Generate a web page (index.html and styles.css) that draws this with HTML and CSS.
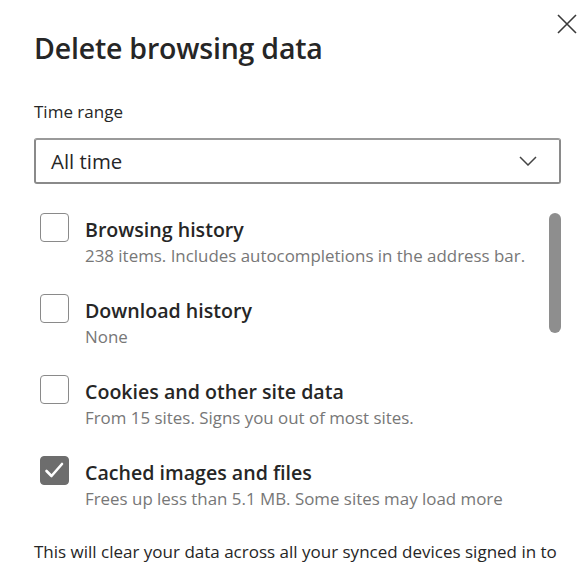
FILE: index.html
```html
<!DOCTYPE html>
<html lang="en">
<head>
<meta charset="utf-8">
<title>Delete browsing data</title>
<link rel="stylesheet" href="styles.css">
</head>
<body>
<div class="dialog">
  <button class="close" aria-label="Close">
    <svg width="20" height="20" viewBox="0 0 20 20"><path d="M1 1L19 19M19 1L1 19" stroke="#3a3a3a" stroke-width="1.6" fill="none"/></svg>
  </button>
  <h1 class="title">Delete browsing data</h1>
  <div class="field-label">Time range</div>
  <div class="select">
    <span class="select-value">All time</span>
    <svg class="chevron" width="18" height="10" viewBox="0 0 18 10"><path d="M1 1L9 9L17 1" stroke="#444" stroke-width="1.5" fill="none"/></svg>
  </div>
  <div class="list-area">
    <div class="list">
      <div class="row">
        <span class="box"></span>
        <div class="text">
          <div class="label">Browsing history</div>
          <div class="desc">238 items. Includes autocompletions in the address bar.</div>
        </div>
      </div>
      <div class="row">
        <span class="box"></span>
        <div class="text">
          <div class="label">Download history</div>
          <div class="desc">None</div>
        </div>
      </div>
      <div class="row">
        <span class="box"></span>
        <div class="text">
          <div class="label">Cookies and other site data</div>
          <div class="desc">From 15 sites. Signs you out of most sites.</div>
        </div>
      </div>
      <div class="row">
        <span class="box checked">
          <svg width="27" height="27" viewBox="0 0 27 27"><path d="M5.5 14L10.5 19L21 7" stroke="#fff" stroke-width="2.6" fill="none" stroke-linecap="round" stroke-linejoin="round"/></svg>
        </span>
        <div class="text">
          <div class="label">Cached images and files</div>
          <div class="desc">Frees up less than 5.1 MB. Some sites may load more</div>
        </div>
      </div>
    </div>
    <div class="track"><div class="thumb"></div></div>
  </div>
  <p class="note">This will clear your data across all your synced devices signed in to</p>
</div>
</body>
</html>
```
FILE: styles.css
```css
html, body {
  margin: 0;
  padding: 0;
  background: #fff;
  overflow: hidden;
}
body {
  font-family: "Open Sans", "Noto Sans", sans-serif;
  color: #1f1f1f;
}
.dialog {
  position: relative;
  padding: 28px 24px 0 34px;
  height: 567px;
  box-sizing: border-box;
}
.close {
  position: absolute;
  top: 14px;
  right: 8px;
  width: 20px;
  height: 20px;
  padding: 0;
  border: 0;
  background: none;
  display: flex;
}
.title {
  margin: 0;
  font-size: 28.5px;
  font-weight: 600;
  line-height: 40px;
  color: #262626;
  letter-spacing: -0.2px;
}
.field-label {
  margin-top: 34px;
  font-size: 17px;
  line-height: 20px;
  color: #262626;
}
.select {
  margin-top: 16px;
  height: 46px;
  box-sizing: border-box;
  border: 2px solid #8a8a8a;
  border-top-color: #9a9a9a;
  border-radius: 3px;
  display: flex;
  align-items: center;
  justify-content: space-between;
  padding: 0 22px 0 15px;
}
.select-value {
  font-size: 20.4px;
  color: #262626;
}
.chevron {
  display: block;
}
.list-area {
  display: flex;
  margin-top: 29px;
}
.list {
  flex: 1;
  display: flex;
  flex-direction: column;
  gap: 23px;
  padding-left: 6px;
}
.row {
  display: flex;
  gap: 16px;
  height: 58px;
}
.text {
  padding-top: 1px;
}
.box {
  width: 29px;
  height: 29px;
  box-sizing: border-box;
  border: 1px solid #8a8a8a;
  border-radius: 4px;
  flex: none;
  display: flex;
  align-items: center;
  justify-content: center;
}
.box.checked {
  background: #6d6d6d;
  border-color: #6d6d6d;
}
.label {
  font-size: 19.6px;
  font-weight: 600;
  line-height: 32px;
  color: #262626;
}
.desc {
  font-size: 16.9px;
  line-height: 20px;
  color: #777;
}
.track {
  width: 12px;
  flex: none;
}
.thumb {
  width: 12px;
  height: 120px;
  border-radius: 6px;
  background: #8e8e8e;
}
.note {
  margin: 27px 0 0;
  font-size: 17px;
  line-height: 22px;
  color: #262626;
  white-space: nowrap;
}
```
